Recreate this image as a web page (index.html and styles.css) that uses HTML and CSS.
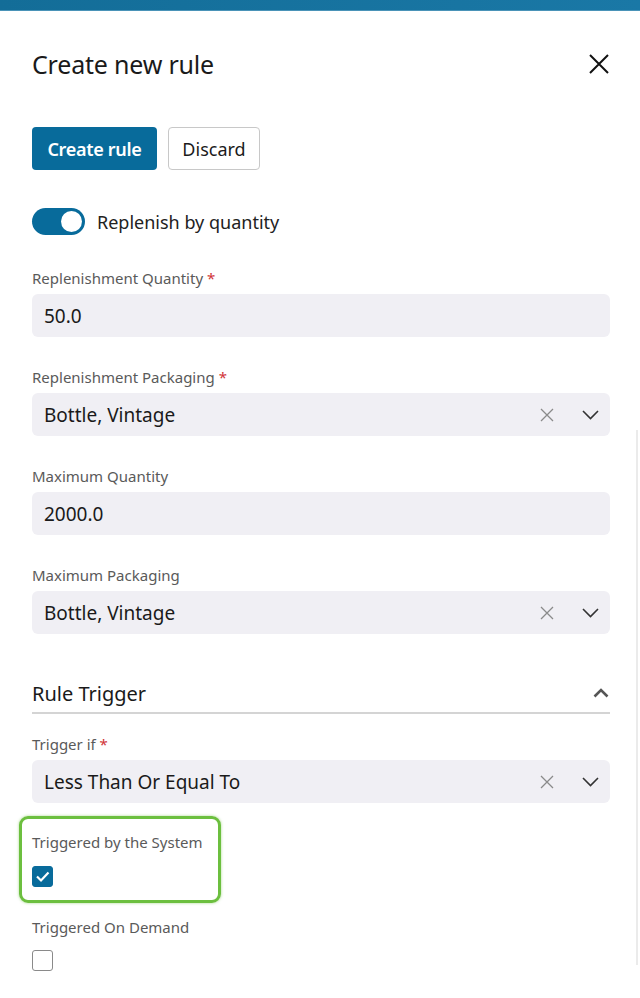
FILE: index.html
```html
<!DOCTYPE html>
<html>
<head>
<meta charset="utf-8">
<link rel="stylesheet" href="styles.css">
</head>
<body>
<div class="topbar"></div>
<div class="scrolltrack"></div>
<main class="panel">
  <header class="head">
    <h1 class="title">Create new rule</h1>
    <svg class="close" width="22" height="22" viewBox="0 0 22 22"><path d="M2 2 L20 20 M20 2 L2 20" stroke="#111" stroke-width="2" fill="none"/></svg>
  </header>
  <div class="actions">
    <button class="btn primary">Create rule</button>
    <button class="btn secondary">Discard</button>
  </div>
  <div class="toggle-row">
    <span class="toggle"><span class="knob"></span></span>
    <span class="toggle-label">Replenish by quantity</span>
  </div>

  <div class="field first">
    <label class="label">Replenishment Quantity <span class="req">*</span></label>
    <div class="input">50.0</div>
  </div>
  <div class="field">
    <label class="label">Replenishment Packaging <span class="req">*</span></label>
    <div class="input select">
      <span class="value">Bottle, Vintage</span>
      <svg class="clear" width="14" height="14" viewBox="0 0 14 14"><path d="M1 1 L13 13 M13 1 L1 13" stroke="#8a8a8a" stroke-width="1.3" fill="none"/></svg>
      <svg class="chev" width="17" height="10" viewBox="0 0 17 10"><path d="M1 1 L8.5 8.5 L16 1" stroke="#333" stroke-width="1.6" fill="none"/></svg>
    </div>
  </div>
  <div class="field">
    <label class="label">Maximum Quantity</label>
    <div class="input">2000.0</div>
  </div>
  <div class="field">
    <label class="label">Maximum Packaging</label>
    <div class="input select">
      <span class="value">Bottle, Vintage</span>
      <svg class="clear" width="14" height="14" viewBox="0 0 14 14"><path d="M1 1 L13 13 M13 1 L1 13" stroke="#8a8a8a" stroke-width="1.3" fill="none"/></svg>
      <svg class="chev" width="17" height="10" viewBox="0 0 17 10"><path d="M1 1 L8.5 8.5 L16 1" stroke="#333" stroke-width="1.6" fill="none"/></svg>
    </div>
  </div>

  <section class="section">
    <div class="section-head">
      <span class="section-title">Rule Trigger</span>
      <svg class="caret" width="16" height="10" viewBox="0 0 16 10"><path d="M1.5 8.5 L8 2 L14.5 8.5" stroke="#555" stroke-width="2.6" fill="none"/></svg>
    </div>
    <div class="field trig">
      <label class="label">Trigger if <span class="req">*</span></label>
      <div class="input select">
        <span class="value">Less Than Or Equal To</span>
        <svg class="clear" width="14" height="14" viewBox="0 0 14 14"><path d="M1 1 L13 13 M13 1 L1 13" stroke="#8a8a8a" stroke-width="1.3" fill="none"/></svg>
        <svg class="chev" width="17" height="10" viewBox="0 0 17 10"><path d="M1 1 L8.5 8.5 L16 1" stroke="#333" stroke-width="1.6" fill="none"/></svg>
      </div>
    </div>
    <div class="check-field highlight">
      <label class="label">Triggered by the System</label>
      <span class="checkbox checked"><svg width="21" height="21" viewBox="0 0 21 21"><path d="M5 10.5 L9 14.5 L16.5 6.5" stroke="#fff" stroke-width="2.2" fill="none"/></svg></span>
    </div>
    <div class="check-field plain">
      <label class="label">Triggered On Demand</label>
      <span class="checkbox"></span>
    </div>
  </section>
</main>
</body>
</html>
```
FILE: styles.css
```css
* { box-sizing: border-box; }
html, body { margin: 0; padding: 0; background: #fff; }
body {
  font-family: "Noto Sans", "Open Sans", "Liberation Sans", sans-serif;
  color: #1b1b1b;
  width: 640px;
  height: 998px;
  overflow: hidden;
  position: relative;
}
.topbar {
  height: 11px;
  background: linear-gradient(to right, #136d98, #1a78a6);
  border-bottom: 1px solid #4a93b8;
}
.scrolltrack {
  position: absolute;
  left: 636px;
  top: 430px;
  width: 2px;
  height: 535px;
  background: #ebebeb;
}
.panel { padding: 0 30px 0 32px; }
.head {
  display: flex;
  align-items: center;
  justify-content: space-between;
  margin-top: 38px;
  height: 30px;
}
.title {
  margin: 0;
  font-size: 25px;
  font-weight: 400;
  letter-spacing: -0.2px;
  color: #1a1a1a;
}
.actions {
  display: flex;
  gap: 11px;
  margin-top: 48px;
}
.btn {
  height: 43px;
  border-radius: 4px;
  font-family: inherit;
  font-size: 18px;
  padding: 0;
  white-space: nowrap;
  cursor: pointer;
}
.btn.primary {
  background: #086b9b;
  color: #fff;
  border: none;
  font-weight: 600;
  width: 125px;
  letter-spacing: -0.3px;
}
.btn.secondary {
  background: #fff;
  color: #1b1b1b;
  border: 1px solid #c8c8c8;
  width: 92px;
}
.toggle-row {
  display: flex;
  align-items: center;
  gap: 12px;
  margin-top: 38px;
}
.toggle {
  width: 53px;
  height: 27px;
  border-radius: 14px;
  background: #086b9b;
  position: relative;
  display: inline-block;
}
.knob {
  position: absolute;
  right: 3px;
  top: 3px;
  width: 21px;
  height: 21px;
  border-radius: 50%;
  background: #fff;
}
.toggle-label { font-size: 18px; color: #222; }
.field { margin-top: 30px; }
.field.first { margin-top: 33px; }
.label {
  display: block;
  font-size: 15px;
  line-height: 20px;
  color: #5a5a5a;
}
.req { color: #d13438; }
.input {
  margin-top: 6px;
  height: 43px;
  width: 578px;
  background: #f0eff4;
  border-radius: 6px;
  padding: 0 12px;
  display: flex;
  align-items: center;
  font-size: 19px;
  color: #1a1a1a;
}
.select .value { flex: 1; }
.select .clear { margin-right: 28px; }
.select .chev { margin-right: -1px; }
.section { margin-top: 43px; }
.section-head {
  width: 578px;
  display: flex;
  align-items: center;
  justify-content: space-between;
  height: 32px;
  border-bottom: 2px solid #d4d4d4;
  padding-bottom: 3px;
  box-sizing: content-box;
}
.section-title { font-size: 20px; color: #1a1a1a; }
.caret { margin-right: 1px; }
.field.trig { margin-top: 20px; }
.check-field { position: relative; }
.check-field.highlight {
  margin-top: 13px;
  margin-left: -13px;
  width: 202px;
  height: 87px;
  padding: 16px 0 0 10px;
  border: 3px solid #6cbf3f;
  border-radius: 9px;
  box-shadow: 0 0 3px rgba(108,191,63,0.6);
}
.check-field.highlight .label { margin-top: -3px; }
.check-field.highlight .checkbox { margin-top: 14px; }
.check-field.plain { margin-top: 14px; }
.checkbox {
  display: block;
  margin-top: 13px;
  width: 21px;
  height: 21px;
  border-radius: 3px;
  border: 1px solid #8a8a8a;
  background: #fff;
}
.checkbox.checked {
  background: #086b9b;
  border-color: #086b9b;
}
.checkbox svg { display: block; margin: -1px; }
```
